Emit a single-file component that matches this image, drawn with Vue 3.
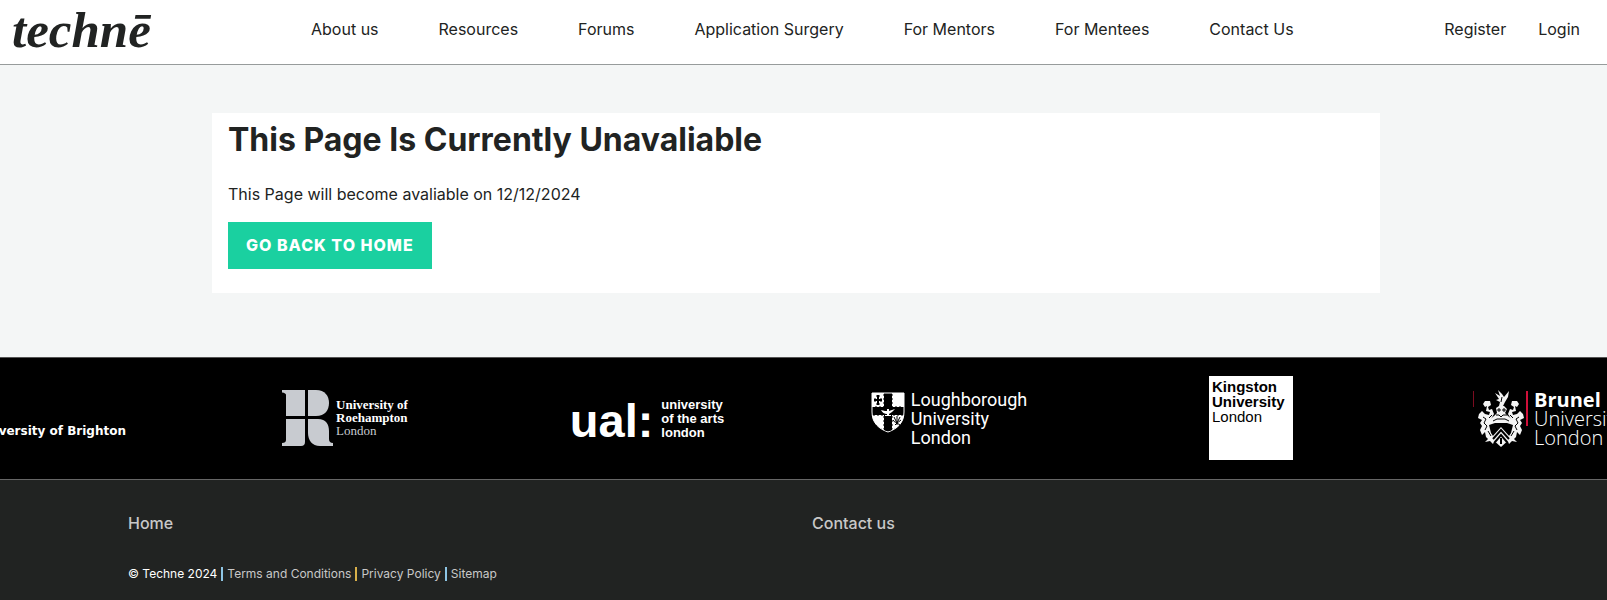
<script setup>
const mainLinks = ['About us', 'Resources', 'Forums', 'Application Surgery', 'For Mentors', 'For Mentees', 'Contact Us']
const accountLinks = ['Register', 'Login']
const legalLinks = [
  { text: 'Terms and Conditions', tone: 'blue' },
  { text: 'Privacy Policy', tone: 'amber' },
  { text: 'Sitemap', tone: 'blue' }
]
</script>

<template>
  <div class="page">
    <header class="header">
      <a class="brand" href="#">technē</a>
      <nav class="nav" aria-label="Main">
        <a v-for="l in mainLinks" :key="l" href="#">{{ l }}</a>
      </nav>
      <nav class="account" aria-label="Account">
        <a v-for="l in accountLinks" :key="l" href="#">{{ l }}</a>
      </nav>
    </header>

    <main class="main">
      <section class="card">
        <h1>This Page Is Currently Unavaliable</h1>
        <p>This Page will become avaliable on 12/12/2024</p>
        <a class="button" href="#">GO BACK TO HOME</a>
      </section>
    </main>

    <section class="partners" aria-label="Partner universities">
      <div class="slide brighton"><span>University of Brighton</span></div>

      <div class="slide roehampton">
        <svg width="52" height="58" viewBox="0 0 52 58" fill="#c8cbd0" aria-hidden="true">
          <path d="M0 1H23V27H4V6Q4 4 0 3.500Z" />
          <path d="M26 1H34C43 1 47 7 47 14S43 27 34 27H26Z" />
          <path d="M4 30H23V53Q23 57 19 57H0V54Q4 54 4 51Z" />
          <path d="M26 30H36C44 30 47 35 47 42V50Q47 54 51 54V57H38C30 57 26 51 26 44Z" />
        </svg>
        <p>University of<br>Roehampton<br><span>London</span></p>
      </div>

      <div class="slide ual">
        <strong>ual:</strong>
        <p>university<br>of the arts<br>london</p>
      </div>

      <div class="slide lough">
        <svg width="34" height="41" viewBox="0 0 34 41" aria-hidden="true">
          <path d="M1 1H33V20C33 31 26 37 17 40C8 37 1 31 1 20Z" fill="#000" stroke="#fff" />
          <path d="M1 1H13V15H1ZM21 1H33V15H21ZM1 23H13V38C6 35 2 30 1 23ZM21 23H33C32 30 28 35 21 38Z" fill="#fff" />
          <path d="M13 2V15H2M21 2V15H32M2 23H13V37M32 23H21V37" fill="none" stroke="#000" stroke-dasharray="2 2" />
          <path d="M7 3V13M3 8H11" stroke="#000" stroke-width="2" />
          <path d="M5 4H9M5 12H9M4 6V10M10 6V10" stroke="#000" />
          <path d="M10 18L14 19H18L24 17L21 20L18 22V23H20V24H14V23H16V22Q12 22 10 18ZM16 17H18V19H16Z" fill="#fff" />
          <path d="M23 25L26 31L24 33M26 24V33M29 25L26 31L29 33M22 28Q25 33 30 28" fill="none" stroke="#000" />
          <path d="M17 26V39" stroke="#000" stroke-width="5" />
        </svg>
        <p>Loughborough<br>University<br>London</p>
      </div>

      <div class="slide kingston">
        <p>Kingston<br>University<br><span>London</span></p>
      </div>

      <div class="slide brunel">
        <svg width="56" height="60" viewBox="0 0 56 60" aria-hidden="true">
          <path d="M0 2H1V18H0Z" fill="#7c0c20" />
          <path d="M53 2H55V37H53Z" fill="#d0103a" />
          <g fill="#f4f4f4">
            <path d="M22 4L27 7L25 1L29 5L31 8L36 2L35 8L32 13L30 17H26L27 13L23 11L26 10Z" />
            <path d="M18 16L17 12L12 12L10 15L12 18L14 17L13 22L17 23L16 26L12 25L9 22L6 25L5 29L9 31L7 34L9 37L7 41L9 46L12 43L13 48L15 50L12 53L17 52L20 55L22 50L18 44L16 36L18 30L21 25L19 20L16 21L15 18Z" />
            <path d="M38 16L39 12L44 12L46 15L44 18L42 17L43 22L39 23L40 26L44 25L47 22L50 25L51 29L47 31L49 34L47 37L49 41L47 46L44 43L43 48L41 50L44 53L39 52L36 55L34 50L38 44L40 36L38 30L35 25L37 20L40 21L41 18Z" />
            <path d="M23 19L26 17H31L34 20L32 24L35 27L40 31V36L34 34H22L16 36V31L21 27L24 24Z" />
            <path d="M28 38L38 49L28 58L18 49Z" />
          </g>
          <g fill="none" stroke="#000">
            <path d="M25 20H27V22H25ZM30 20H32V22H30ZM23 26H26L28 28L30 26H34M20 32L24 30H32L36 32" />
            <path d="M20 50L28 41L36 50M22 53L28 46L34 53M28 49V55" stroke-width="2" />
            <path d="M10 28L13 30L11 34L14 37L12 41M46 28L43 30L45 34L42 37L44 41M15 42L18 47M41 42L38 47M19 26L16 29M37 26L40 29M29 8L28 13" />
          </g>
        </svg>
        <p><strong>Brunel</strong><br>University<br>London</p>
      </div>
    </section>

    <footer class="footer">
      <div class="footer-links">
        <a href="#">Home</a>
        <a href="#">Contact us</a>
      </div>
      <div class="legal">
        <span>© Techne 2024</span>
        <a v-for="l in legalLinks" :key="l.text" href="#" :class="l.tone">{{ l.text }}</a>
      </div>
    </footer>
  </div>
</template>

<style>
body { margin: 0; }
</style>

<style scoped>
.page {
  min-height: 100vh;
  display: flex;
  flex-direction: column;
  overflow: hidden;
  background: #f4f6f6;
  color: #212322;
  font: 400 16px/24px Inter, sans-serif;
}
a { color: inherit; text-decoration: none; }
p, h1 { margin: 0; }

.header {
  display: flex;
  align-items: center;
  height: 64px;
  padding: 0 27px 0 12px;
  background: #fff;
  border-bottom: 1px solid #979b9b;
}
.brand {
  width: 299px;
  margin-bottom: 4px;
  font: italic 700 51px/56px "Liberation Serif", serif;
}
.nav, .account { display: flex; gap: 60px; margin-bottom: 6px; white-space: nowrap; }
.account { gap: 32px; margin-left: auto; }

.main { padding: 48px 227px 64px 212px; }
.card { padding: 8px 16px 24px; background: #fff; }
h1 { font-size: 32px; line-height: 38px; font-weight: 700; }
.card p { margin: 23px 0 16px; }
.button {
  display: inline-block;
  padding: 0 18px;
  background: #1ad0a0;
  color: #fff;
  font-weight: 800;
  line-height: 47px;
  letter-spacing: 1px;
  vertical-align: top;
}

.partners {
  display: grid;
  grid-template-columns: repeat(6, 302px);
  height: 121px;
  margin-left: -108px;
  background: #000;
  border-top: 1px solid #555;
  border-bottom: 1px solid #666;
  color: #fff;
}
.slide { display: flex; align-items: center; justify-content: center; white-space: nowrap; }
.brighton { justify-content: flex-end; padding: 24px 68px 0 0; font: 700 12px/16px "DejaVu Sans", sans-serif; }
.roehampton { gap: 2px; margin-bottom: 2px; font: 700 13px/13px "Liberation Serif", serif; }
.roehampton span { font-weight: 400; color: #c8cbd0; }
.ual { gap: 8px; font: 700 13px/14px "Liberation Sans", sans-serif; }
.ual strong { margin-top: 4px; font-size: 47px; line-height: 48px; }
.lough { gap: 6px; font: 400 18px/19px Roboto, sans-serif; }
.lough svg { margin-bottom: 12px; }
.kingston p {
  box-sizing: border-box;
  width: 84px;
  height: 84px;
  margin-bottom: 2px;
  padding: 3px;
  background: #fff;
  color: #000;
  font: 700 15px/15px "Liberation Sans", sans-serif;
}
.kingston span { font-weight: 400; }
.brunel { justify-content: flex-start; gap: 5px; padding-left: 71px; font: 300 20px/19px "Open Sans", sans-serif; }
.brunel strong { font-weight: 700; }

.footer {
  flex: 1;
  padding: 31px 111px 14px 128px;
  background: #212322;
  color: #c8c8c8;
}
.footer-links { display: grid; grid-template-columns: 1fr 1fr; font-weight: 500; }
.legal { display: flex; align-items: center; margin-top: 32px; font-size: 12px; line-height: 14px; }
.legal span { color: #fff; }
.legal a { margin-left: 4px; padding-left: 4px; border-left: 2px solid; }
.legal .blue { border-left-color: #8ec5e4; }
.legal .amber { border-left-color: #d9b04a; }
</style>
